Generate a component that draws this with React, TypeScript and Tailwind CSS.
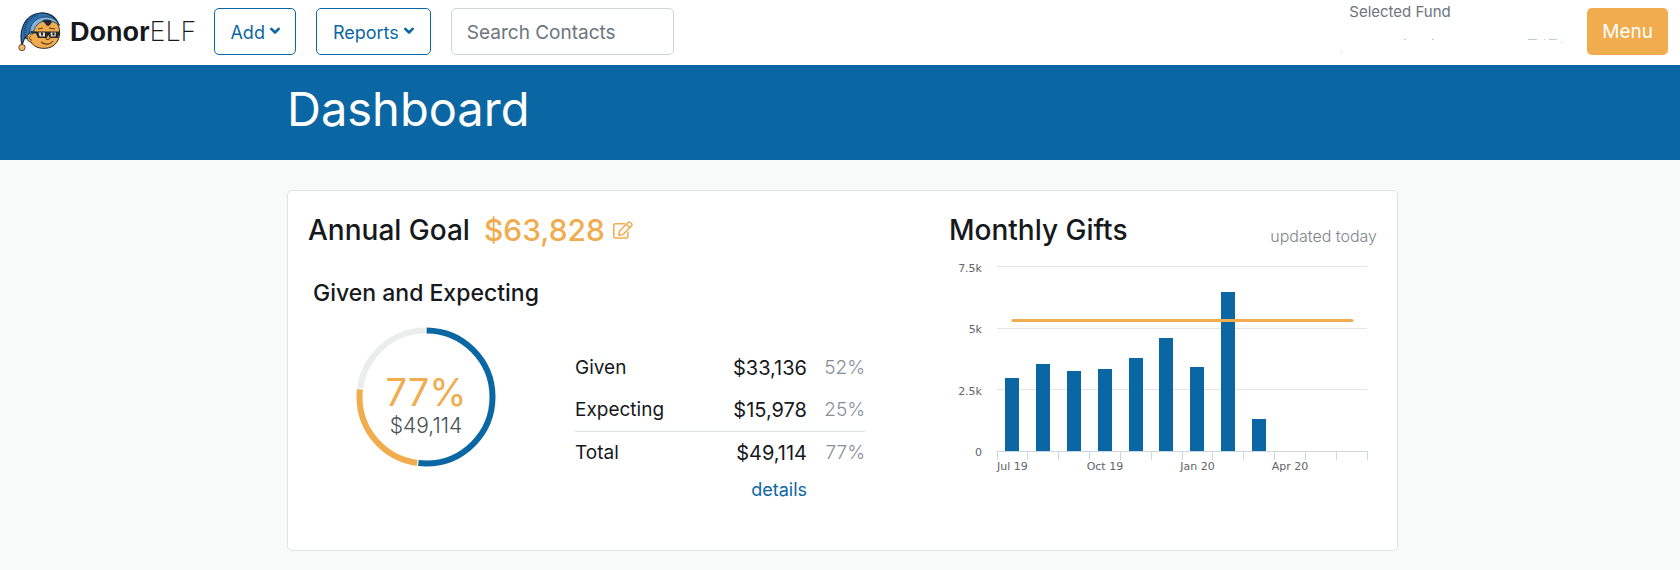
const BLUE = "#0b67a3";
const ORANGE = "#f0ac4d";

const gifts = [3000, 3530, 3250, 3330, 3780, 4600, 3410, 6460, 1310, 0, 0, 0];
const monthLabels = ["Jul 19", "Oct 19", "Jan 20", "Apr 20"];
const rows = [
  { label: "Given", amount: "$33,136", percent: "52%" },
  { label: "Expecting", amount: "$15,978", percent: "25%" },
  { label: "Total", amount: "$49,114", percent: "77%" },
];

function ElfLogo() {
  return (
    <svg viewBox="0 0 44 40" className="h-10 w-11" aria-hidden="true">
      <path d="M4 33C1 20 5 3 22 1c9-1 16 4 19 12L30 9 17 18l-4 10-6-3z" fill="#2d73ae" stroke="#1b2a3c" strokeWidth="1.2" />
      <path d="M8 27C4 18 9 5 20 3" fill="none" stroke="#174b7c" strokeWidth="2.5" strokeDasharray="1 1" />
      <path d="M17 11c5-6 17-6 22 0 5 8 3 20-6 24-7 3-17 1-20-5-4 0-6-7-1-9 0-5 2-7 5-10z" fill="#f0ab4f" stroke="#2c2924" strokeWidth="1" />
      <path d="M12 22c-1-11 7-17 16-17 6 0 11 3 13 8-6-5-17-6-22 0-3 3-3 6-4 9z" fill="#83b3dc" stroke="#1d3b58" strokeWidth=".8" />
      <path d="M24 9c3-2 9-2 10 1-1 1-2 4-4 4s-2-3-6-5z" fill="#252a32" />
      <path d="m13 19 5 .5h23l.5 2-1.500 4.500h-8l-1.500-3-2 3H20l-2-4.500-5-.5z" fill="#24282c" />
      <path d="M20.500 20.500h6.500v4h-5.500zM32.500 20.500H38l-.5 4H33z" fill="#e9dcc0" />
      <path d="M23 20.500h2v3h-2zM34.500 20.500h2v3h-2z" fill="#24282c" />
      <path d="M28 26c0 2 3 2 4 0M23 30c4 3 9 3 12-1M20 17l5-1M31 16l6 1" fill="none" stroke="#5f3c16" strokeWidth="1.100" />
      <path d="M13 24c-3 1-1 5 1 4" fill="none" stroke="#5f3c16" />
      <circle cx="4" cy="35.500" r="3.200" fill="#f5b66a" stroke="#56401f" strokeWidth=".9" />
    </svg>
  );
}

function Caret() {
  return (
    <svg viewBox="0 0 10 8" className="mb-1 h-2 w-2.5" aria-hidden="true">
      <path d="M1.300 1.800 5 5.500l3.700-3.700" fill="none" stroke="currentColor" strokeWidth="2.500" strokeLinecap="round" strokeLinejoin="round" />
    </svg>
  );
}

function EditIcon() {
  return (
    <svg viewBox="0 0 20 18" className="h-[18px] w-5" fill="none" stroke="currentColor" strokeWidth="1.500" strokeLinejoin="round" strokeLinecap="round" aria-hidden="true">
      <path d="M11.500 2.800H2.200c-.8 0-1.400.5-1.400 1.300v11.600c0 .8.6 1.400 1.400 1.400h11.400c.8 0 1.300-.6 1.300-1.400v-4.500" />
      <path d="m6.300 10.300 8.800-8.800c.7-.7 1.500-.7 2.200 0l1.200 1.200c.7.700.7 1.500 0 2.200l-8.800 8.800-3.800.5zM13.300 3.300l3.400 3.400" />
    </svg>
  );
}

function Donut() {
  const arc = (length: number, start: number, color: string) => (
    <circle
      cx="70" cy="70" r="66.500" fill="none" stroke={color} strokeWidth="6" pathLength={100}
      strokeDasharray={`${length - 0.3} ${100.3 - length}`} strokeDashoffset={-start - 0.15}
      transform="rotate(-90 70 70)"
    />
  );
  return (
    <div className="relative size-[140px] shrink-0">
      <svg viewBox="0 0 140 140" className="size-full" aria-hidden="true">
        {arc(52, 0, BLUE)}
        {arc(25, 52, ORANGE)}
        {arc(23, 77, "#ebecec")}
      </svg>
      <div className="absolute inset-0 flex flex-col items-center justify-center pt-[18px]">
        <span className="text-[38px] leading-10 text-[#f0ac4d]">77%</span>
        <span className="text-[21px] leading-7 font-light text-[#495057]">$49,114</span>
      </div>
    </div>
  );
}

function GiftsChart() {
  const step = 370 / 12;
  const y = (value: number) => 204.5 - (value * 185) / 7500;
  return (
    <svg viewBox="0 0 428 230" className="block w-full" role="img" aria-label="Monthly Gifts" fontFamily="'DejaVu Sans', sans-serif" fontSize="11" fill="#5f6468">
      {[["7.5k", 7500], ["5k", 5000], ["2.5k", 2500]].map(([label, value]) => (
        <g key={label}>
          <path d={`M48 ${Math.floor(y(Number(value))) + 0.5}H418`} stroke="#e3e5e6" />
          <text x="33" y={y(Number(value)) + 5} textAnchor="end">{label}</text>
        </g>
      ))}
      <text x="33" y="209" textAnchor="end">0</text>
      {gifts.map((gift, i) => (
        <rect key={i} x={Math.floor(48.3 + step * (i + 0.5) - 7)} y={Math.round(y(gift))} width="14" height={Math.max(0, 204 - Math.round(y(gift)))} fill={BLUE} />
      ))}
      <path d="M47.500 204.500H418.500" stroke="#ccd6e0" />
      {Array.from({ length: 13 }, (_, i) => (
        <path key={i} d={`M${Math.floor(48 + step * i) + 0.5} 204v9`} stroke="#ccd6e0" />
      ))}
      <path d="M64 73.500H403" stroke={ORANGE} strokeWidth="3" strokeLinecap="round" />
      {monthLabels.map((label, i) => (
        <text key={label} x={48 + step * (i * 3 + 0.5)} y="223" textAnchor="middle">{label}</text>
      ))}
    </svg>
  );
}

export default function App() {
  return (
    <div className="min-h-screen bg-[#f8faf9] font-['Inter',sans-serif] text-[#16191c]">
      <header className="flex h-[65px] items-start bg-white pt-2 pr-3 pl-[18px]">
        <a href="#home" className="flex h-12 items-center gap-2">
          <ElfLogo />
          <span className="text-[27px] leading-8">
            <span className="font-['Liberation_Sans',sans-serif] font-bold">Donor</span>
            <span className="font-extralight">ELF</span>
          </span>
        </a>
        <button className="ml-[18px] flex h-[47px] items-center gap-[5px] rounded-[5px] border border-[#0b67a3] px-[15px] pt-0.5 text-lg text-[#0b67a3]">
          Add <Caret />
        </button>
        <button className="ml-5 flex h-[47px] items-center gap-[5px] rounded-[5px] border border-[#0b67a3] px-4 pt-0.5 text-lg text-[#0b67a3]">
          Reports <Caret />
        </button>
        <input aria-label="Search Contacts" placeholder="Search Contacts" className="ml-5 h-[47px] w-[223px] rounded-[5px] border border-[#ced6dc] bg-white px-[15px] pt-0.5 text-[19px] placeholder:text-[#6c757d]" />
        <div className="-mt-2 mr-6 ml-auto w-[222px]">
          <div className="pt-0.5 pl-2 text-[15px] leading-5 text-[#6c757d]">Selected Fund</div>
          <svg viewBox="0 0 222 16" className="mt-4 h-4 w-[222px]" fill="#b9cddd" aria-hidden="true">
            <path d="M63 1h2v1h-2zM91 1h2v1h-2zM187 1h9v1h-9zM203 1h1v1h-1zM208 1h8v1h-8zM220 4h1v1h-1zM0 14h1v1H0z" />
          </svg>
        </div>
        <button className="h-[47px] rounded-[5px] bg-[#f0ac4d] px-[15px] pt-0.5 text-[19px] text-white">Menu</button>
      </header>

      <div className="h-[95px] bg-[#0b67a3] pl-[5px]">
        <div className="mx-auto max-w-[1111px] pt-3.5">
          <h1 className="text-[47px] leading-[60px] text-white">Dashboard</h1>
        </div>
      </div>

      <main className="pt-[30px] pb-4 pl-[5px]">
        <section className="mx-auto flex max-w-[1111px] justify-between rounded-[5px] border border-[#dfe3e5] bg-white px-5 pt-[21px] pb-12">
          <div>
            <h2 className="flex items-center text-[28px] leading-9 font-medium">
              Annual Goal
              <span className="ml-3.5 text-[30px] text-[#f0ac4d]">$63,828</span>
              <button aria-label="Edit annual goal" className="ml-2 text-[#f0ac4d]"><EditIcon /></button>
            </h2>
            <h3 className="mt-[31px] pl-[5px] text-[23px] leading-7 font-medium">Given and Expecting</h3>
            <div className="mt-5 flex pl-12">
              <Donut />
              <div className="ml-[79px] pt-5">
                <table className="w-[290px] text-[19px] leading-6">
                  <tbody>
                    {rows.map((row) => (
                      <tr key={row.label} className="last:border-t last:border-[#dce1e3]">
                        <th scope="row" className="py-[9px] text-left font-normal">{row.label}</th>
                        <td className="py-[9px] text-right text-xl leading-6">{row.amount}</td>
                        <td className="w-[58px] py-[9px] text-right font-light text-[#868e96]">{row.percent}</td>
                      </tr>
                    ))}
                  </tbody>
                </table>
                <div className="mt-1 pr-[58px] text-right text-lg leading-6">
                  <a href="#details" className="text-[#0b67a3]">details</a>
                </div>
              </div>
            </div>
          </div>
          <div className="w-[428px]">
            <div className="flex items-end justify-between">
              <h2 className="text-[28px] leading-9 font-medium">Monthly Gifts</h2>
              <span className="text-base leading-6 font-light text-[#7d858c]">updated today</span>
            </div>
            <div className="-mt-px">
              <GiftsChart />
            </div>
          </div>
        </section>
      </main>
    </div>
  );
}
